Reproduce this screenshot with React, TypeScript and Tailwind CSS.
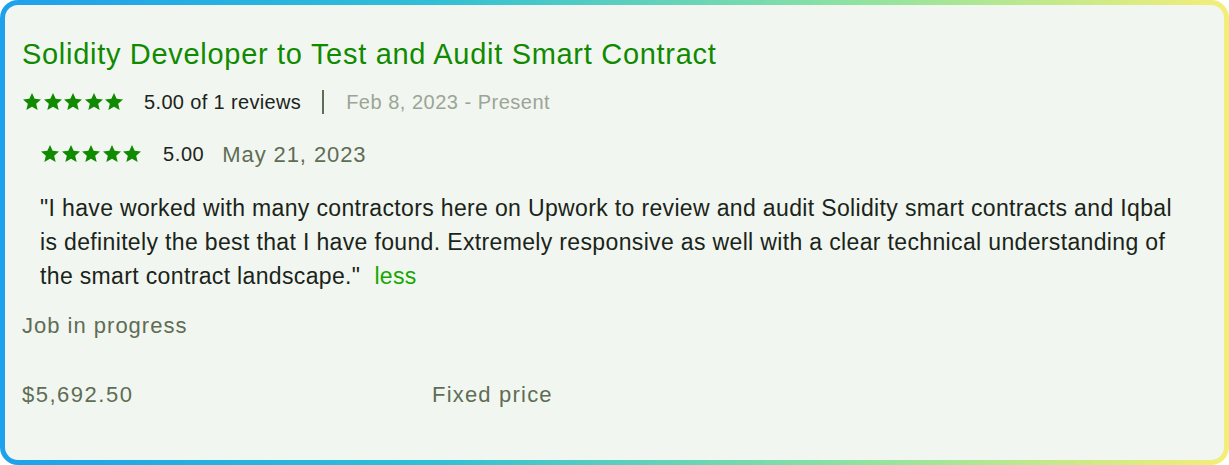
import React from "react";

function Stars({ size = 20 }: { size?: number }) {
  return (
    <div className="flex items-center gap-[0.5px]">
      {[0, 1, 2, 3, 4].map((i) => (
        <svg key={i} width={size} height={size} viewBox="0 0 24 24" fill="#108a00">
          <path d="M12 1.2l3.2 7 7.6.7-5.8 5.1 1.8 7.6L12 17.7l-6.8 3.9 1.8-7.6-5.8-5.1 7.6-.7z" />
        </svg>
      ))}
    </div>
  );
}

export default function App() {
  return (
    <div className="w-[1229px] h-[465px] rounded-[18px] p-[5px] bg-[linear-gradient(90deg,#1ea1ec_0%,#2fbfd6_35%,#8fe3a0_70%,#f4ee78_100%)] font-['Liberation_Sans',Arial,sans-serif]">
      <div className="w-full h-full rounded-[13px] bg-[#f2f6f0] pl-[17px] pr-4 pt-[31px]">
        <h2 className="text-[29px] leading-[36px] tracking-[0.7px] text-[#108a00]">
          Solidity Developer to Test and Audit Smart Contract
        </h2>
        <div className="mt-[18px] flex items-center h-[24px] text-[20px] tracking-[0.35px]">
          <Stars />
          <span className="ml-[20px] text-[#1a241a]">5.00 of 1 reviews</span>
          <span className="ml-[21px] w-[2px] h-[24px] bg-[#5e6d55]" />
          <span className="ml-[22px] text-[#9aa596] tracking-[0.5px]">Feb 8, 2023 - Present</span>
        </div>
        <div className="pl-[18px]">
          <div className="mt-[27px] flex items-center h-[26px]">
            <Stars />
            <span className="ml-[21px] text-[20px] tracking-[0.6px] text-[#1a241a]">5.00</span>
            <span className="ml-[18px] text-[22px] tracking-[0.9px] text-[#5e6d55]">May 21, 2023</span>
          </div>
          <p className="mt-[24px] text-[23px] leading-[34px] tracking-[0.35px] text-[#1a241a]">
            "I have worked with many contractors here on Upwork to review and audit Solidity smart contracts and Iqbal
            <br />
            is definitely the best that I have found. Extremely responsive as well with a clear technical understanding of
            <br />
            the smart contract landscape."<span className="ml-[14px] text-[#14a800]">less</span>
          </p>
        </div>
        <div className="mt-[18px] text-[22px] leading-[30px] tracking-[1px] text-[#5e6d55]">Job in progress</div>
        <div className="mt-[39px] flex text-[22px] leading-[30px] tracking-[1.2px] text-[#5e6d55]">
          <span className="w-[410px] tracking-[1.5px]">$5,692.50</span>
          <span>Fixed price</span>
        </div>
      </div>
    </div>
  );
}
